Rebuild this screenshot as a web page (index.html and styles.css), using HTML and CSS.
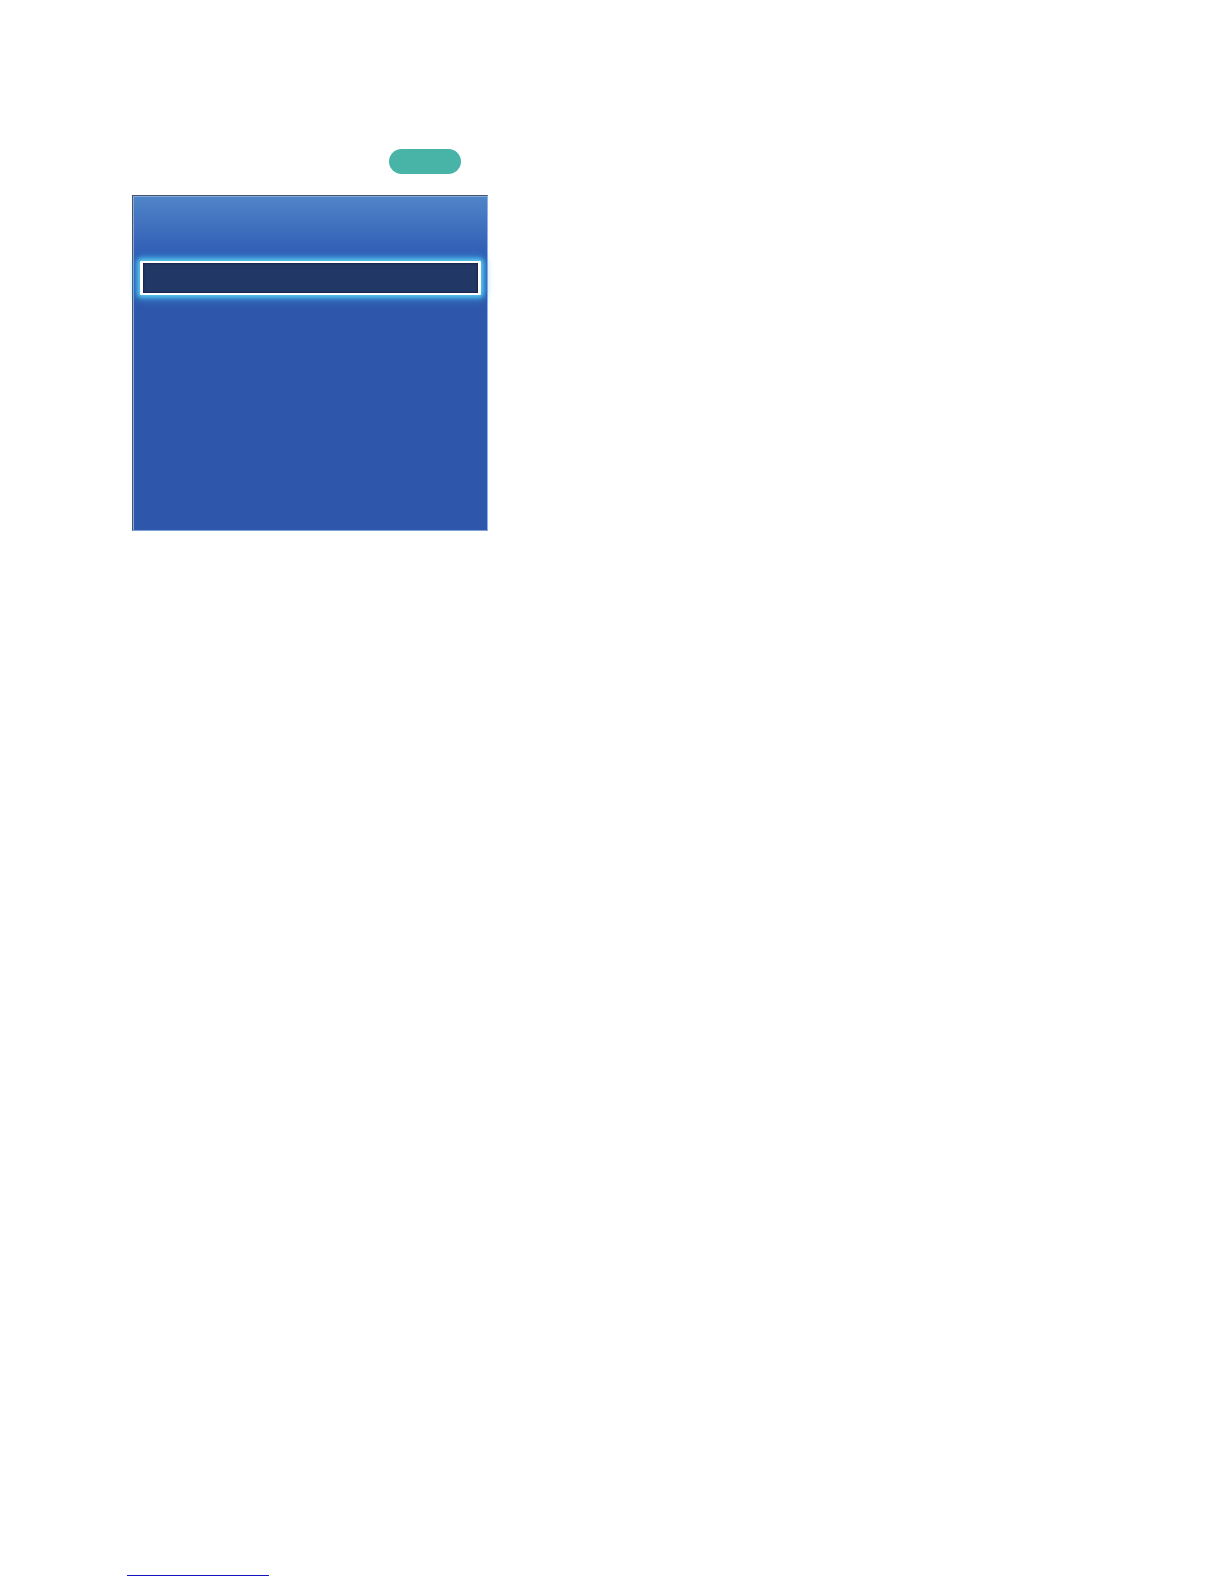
FILE: index.html
```html
<!DOCTYPE html>
<html lang="en">
<head>
  <meta charset="UTF-8">
  <meta name="viewport" content="width=device-width, initial-scale=1.0">
  <title>Menu</title>
  <link rel="stylesheet" href="styles.css">
</head>
<body>
  <main class="content">
    <div class="toolbar">
      <button type="button" class="pill" aria-label="Try now"></button>
    </div>
    <div class="menu">
      <button type="button" class="menu-item selected" aria-label="Selected item"></button>
    </div>
  </main>
  <footer class="footer">
    <a href="#" class="footer-link" aria-label="Back to top"></a>
  </footer>
</body>
</html>
```

FILE: styles.css
```css
* {
  box-sizing: border-box;
}
body {
  display: flex;
  flex-direction: column;
  justify-content: space-between;
  min-height: 100vh;
  margin: 0;
  padding: 149px 127px 8px;
  background: #fff;
  font-family: "Liberation Sans", Arial, sans-serif;
}
.content {
  width: 100%;
  max-width: 361px;
  padding-left: 5px;
}
.toolbar {
  display: flex;
  justify-content: flex-end;
  padding-right: 27px;
  margin-bottom: 21px;
}
.pill {
  width: 72px;
  height: 25px;
  padding: 0;
  border: none;
  border-radius: 13px;
  background: #48b4a8;
  cursor: pointer;
}
.menu {
  min-height: 336px;
  padding: 65px 6px 0 7px;
  border: 1px solid;
  border-color: #46536f #8fb2e8 #7fa3dc #46536f;
  /* Light inner edge along the top and left */
  box-shadow: inset 1px 1px 0 #84a9da;
  background: linear-gradient(#5085c8 0, #2f5cb4 60px, #2e57ac 110px, #2e57ac 100%);
}
.menu-item {
  display: block;
  width: 100%;
  height: 34px;
  padding: 0;
  border: 3px solid transparent;
  background: transparent;
  cursor: pointer;
}
.menu-item.selected {
  border-color: #fff;
  border-top-width: 2px;
  border-bottom-width: 2px;
  border-radius: 1px;
  background: #213866;
  /* Dark inner edge and cyan glow around the item */
  box-shadow: inset 0 0 2px 1px #1c2448, 0 0 4px 2px #58c8ee, 0 0 8px 3px #3fa5e0;
}
.footer {
  display: flex;
}
.footer-link {
  width: 142px;
  border-bottom: 1px solid #1414c0;
}
```
